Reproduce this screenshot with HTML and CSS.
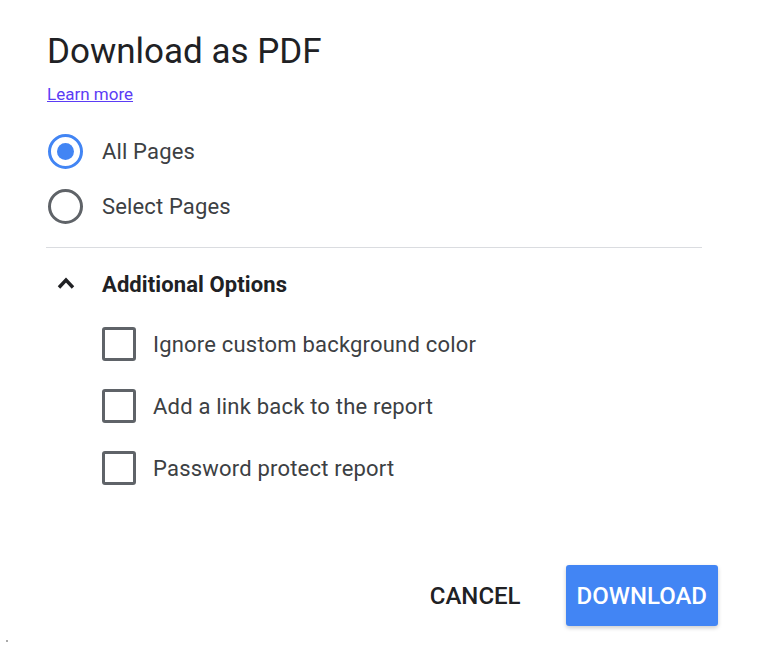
FILE: index.html
```html
<!DOCTYPE html>
<html>
<head>
<meta charset="utf-8">
<link rel="stylesheet" href="styles.css">
</head>
<body>
<div class="dialog">
  <h1 class="title">Download as PDF</h1>
  <a class="learn" href="#">Learn more</a>
  <div class="radios">
    <div class="radio-row">
      <span class="radio checked"><span class="dot"></span></span>
      <span class="label">All Pages</span>
    </div>
    <div class="radio-row">
      <span class="radio"></span>
      <span class="label">Select Pages</span>
    </div>
  </div>
  <div class="divider"></div>
  <div class="section-head">
    <svg class="chevron" width="20" height="14" viewBox="0 0 20 14"><polyline points="3,11.5 10,4 17,11.5" fill="none" stroke="#202124" stroke-width="3.4" stroke-linecap="butt" stroke-linejoin="miter"/></svg>
    <span class="section-title">Additional Options</span>
  </div>
  <div class="checks">
    <div class="check-row"><span class="box"></span><span class="label">Ignore custom background color</span></div>
    <div class="check-row"><span class="box"></span><span class="label">Add a link back to the report</span></div>
    <div class="check-row"><span class="box"></span><span class="label">Password protect report</span></div>
  </div>
  <div class="actions">
    <button class="btn cancel">CANCEL</button>
    <button class="btn primary">DOWNLOAD</button>
  </div>
</div>
<span class="speck"></span>
</body>
</html>
```
FILE: styles.css
```css
html, body {
  margin: 0;
  padding: 0;
  background: #ffffff;
}
body {
  font-family: Roboto, "Noto Sans", Arial, sans-serif;
  color: #3c4043;
  position: relative;
  width: 769px;
  height: 654px;
  overflow: hidden;
}
.dialog {
  padding: 31px 0 0 47px;
  width: 671px;
  display: flex;
  flex-direction: column;
}
.title {
  margin: 0;
  font-size: 35px;
  font-weight: 400;
  line-height: 42px;
  color: #202124;
}
.learn {
  margin-top: 11px;
  font-size: 17px;
  line-height: 20px;
  letter-spacing: 0;
  color: #5b3cf5;
  text-decoration: underline;
  align-self: flex-start;
}
.radios {
  margin-top: 29px;
  display: flex;
  flex-direction: column;
  gap: 19px;
}
.radio-row {
  display: flex;
  align-items: center;
  height: 36px;
}
.radio {
  width: 29px;
  height: 29px;
  border: 3px solid #5f6368;
  border-radius: 50%;
  margin-left: 1px;
  display: flex;
  align-items: center;
  justify-content: center;
  box-sizing: content-box;
}
.radio.checked {
  border-color: #4285f4;
}
.dot {
  width: 17px;
  height: 17px;
  border-radius: 50%;
  background: #4285f4;
}
.radio-row .label {
  margin-left: 19px;
  font-size: 22px;
  letter-spacing: 0.15px;
  color: #3c4043;
}
.divider {
  margin-top: 23px;
  height: 1px;
  width: 656px;
  margin-left: -1px;
  background: #dadce0;
}
.section-head {
  margin-top: 21px;
  display: flex;
  align-items: center;
  height: 30px;
}
.chevron {
  margin-left: 9px;
  margin-top: -2px;
}
.section-title {
  margin-left: 26px;
  font-size: 22px;
  font-weight: 700;
  letter-spacing: 0.1px;
  color: #202124;
}
.checks {
  margin-top: 28px;
  margin-left: 55px;
  display: flex;
  flex-direction: column;
  gap: 28px;
}
.check-row {
  display: flex;
  align-items: center;
  height: 34px;
}
.box {
  width: 28px;
  height: 28px;
  border: 3px solid #5f6368;
  border-radius: 3px;
  box-sizing: content-box;
}
.check-row .label {
  margin-left: 17px;
  font-size: 22px;
  letter-spacing: 0.2px;
  color: #3c4043;
}
.actions {
  margin-top: 80px;
  display: flex;
  justify-content: flex-end;
  align-items: center;
  gap: 33px;
}
.btn {
  font-family: Roboto, "Noto Sans", Arial, sans-serif;
  font-size: 24px;
  font-weight: 500;
  border: none;
  border-radius: 3px;
  height: 61px;
  padding: 0 12px;
  cursor: pointer;
}
.cancel {
  background: transparent;
  color: #202124;
}
.primary {
  background: #4285f4;
  color: #ffffff;
  padding: 0 11px;
  box-shadow: 0 2px 4px rgba(0,0,0,0.2);
}
.speck {
  position: absolute;
  left: 6px;
  top: 640px;
  width: 2px;
  height: 2px;
  background: #aaa;
}
```
